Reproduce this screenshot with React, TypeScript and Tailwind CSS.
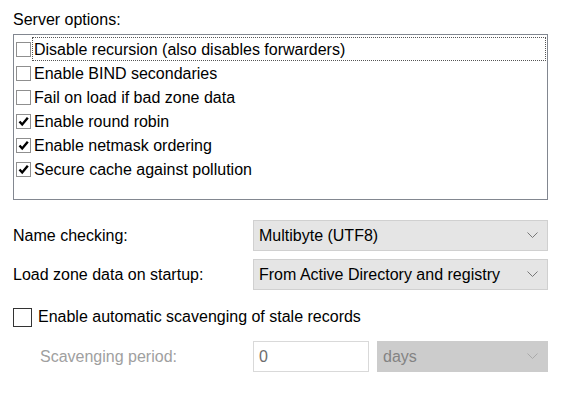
import React from "react";

const font = { fontFamily: '"Liberation Sans", Arial, sans-serif' };

function Check({ checked }: { checked: boolean }) {
  return (
    <div className="w-[15px] h-[15px] border border-[#8f8f8f] bg-white flex items-center justify-center shrink-0">
      {checked && (
        <svg width="11" height="11" viewBox="0 0 11 11">
          <path d="M1.5 5.5 L4.2 8.5 L9.8 1.8" stroke="#000" strokeWidth="2.4" fill="none" />
        </svg>
      )}
    </div>
  );
}

function Chevron({ color }: { color: string }) {
  return (
    <svg width="11" height="7" viewBox="0 0 11 7">
      <path d="M0.5 0.5 L5.5 5.5 L10.5 0.5" stroke={color} strokeWidth="1" fill="none" />
    </svg>
  );
}

const items: [string, boolean][] = [
  ["Disable recursion (also disables forwarders)", false],
  ["Enable BIND secondaries", false],
  ["Fail on load if bad zone data", false],
  ["Enable round robin", true],
  ["Enable netmask ordering", true],
  ["Secure cache against pollution", true],
];

export default function App() {
  return (
    <div className="w-[566px] h-[395px] bg-white text-[16px] text-black relative" style={font}>
      <div className="pl-[13px] pr-[18px] pt-[9px]">
        <div className="h-[22px] leading-[22px]">Server options:</div>
        <div className="mt-[3px] h-[166px] border border-[#828790] pt-[2px] pl-[2px] pr-[1px]">
          {items.map(([label, checked], i) => (
            <div key={i} className="h-[24px] flex items-center">
              <Check checked={checked} />
              <div
                className={`h-[24px] leading-[23px] flex-1 ml-[1px] pl-[1px] ${i === 0 ? "border border-dotted border-[#555]" : "border border-transparent"}`}
              >
                {label}
              </div>
            </div>
          ))}
        </div>
        <div className="mt-[20px] flex items-center h-[31px]">
          <div className="w-[240px]">Name checking:</div>
          <div className="flex-1 h-[31px] bg-[#e5e5e5] border border-[#d0d0d0] flex items-center justify-between pl-[5px] pr-[9px]">
            <span>Multibyte (UTF8)</span>
            <Chevron color="#777" />
          </div>
        </div>
        <div className="mt-[8px] flex items-center h-[31px]">
          <div className="w-[240px]">Load zone data on startup:</div>
          <div className="flex-1 h-[31px] bg-[#e5e5e5] border border-[#d0d0d0] flex items-center justify-between pl-[5px] pr-[9px]">
            <span>From Active Directory and registry</span>
            <Chevron color="#777" />
          </div>
        </div>
        <div className="mt-[17px] flex items-center h-[20px]">
          <div className="w-[19px] h-[19px] border border-[#333] bg-white shrink-0" />
          <span className="ml-[6px]">Enable automatic scavenging of stale records</span>
        </div>
        <div className="mt-[14px] flex items-center h-[31px]">
          <div className="w-[240px] pl-[27px] text-[#a0a0a0]">Scavenging period:</div>
          <div className="w-[116px] h-[31px] border border-[#d9d9d9] bg-white flex items-center pl-[5px] text-[#6d6d6d]">0</div>
          <div className="ml-[8px] flex-1 h-[31px] bg-[#cccccc] border border-[#cccccc] flex items-center justify-between pl-[5px] pr-[9px] text-[#838383]">
            <span>days</span>
            <Chevron color="#aaa" />
          </div>
        </div>
      </div>
    </div>
  );
}
